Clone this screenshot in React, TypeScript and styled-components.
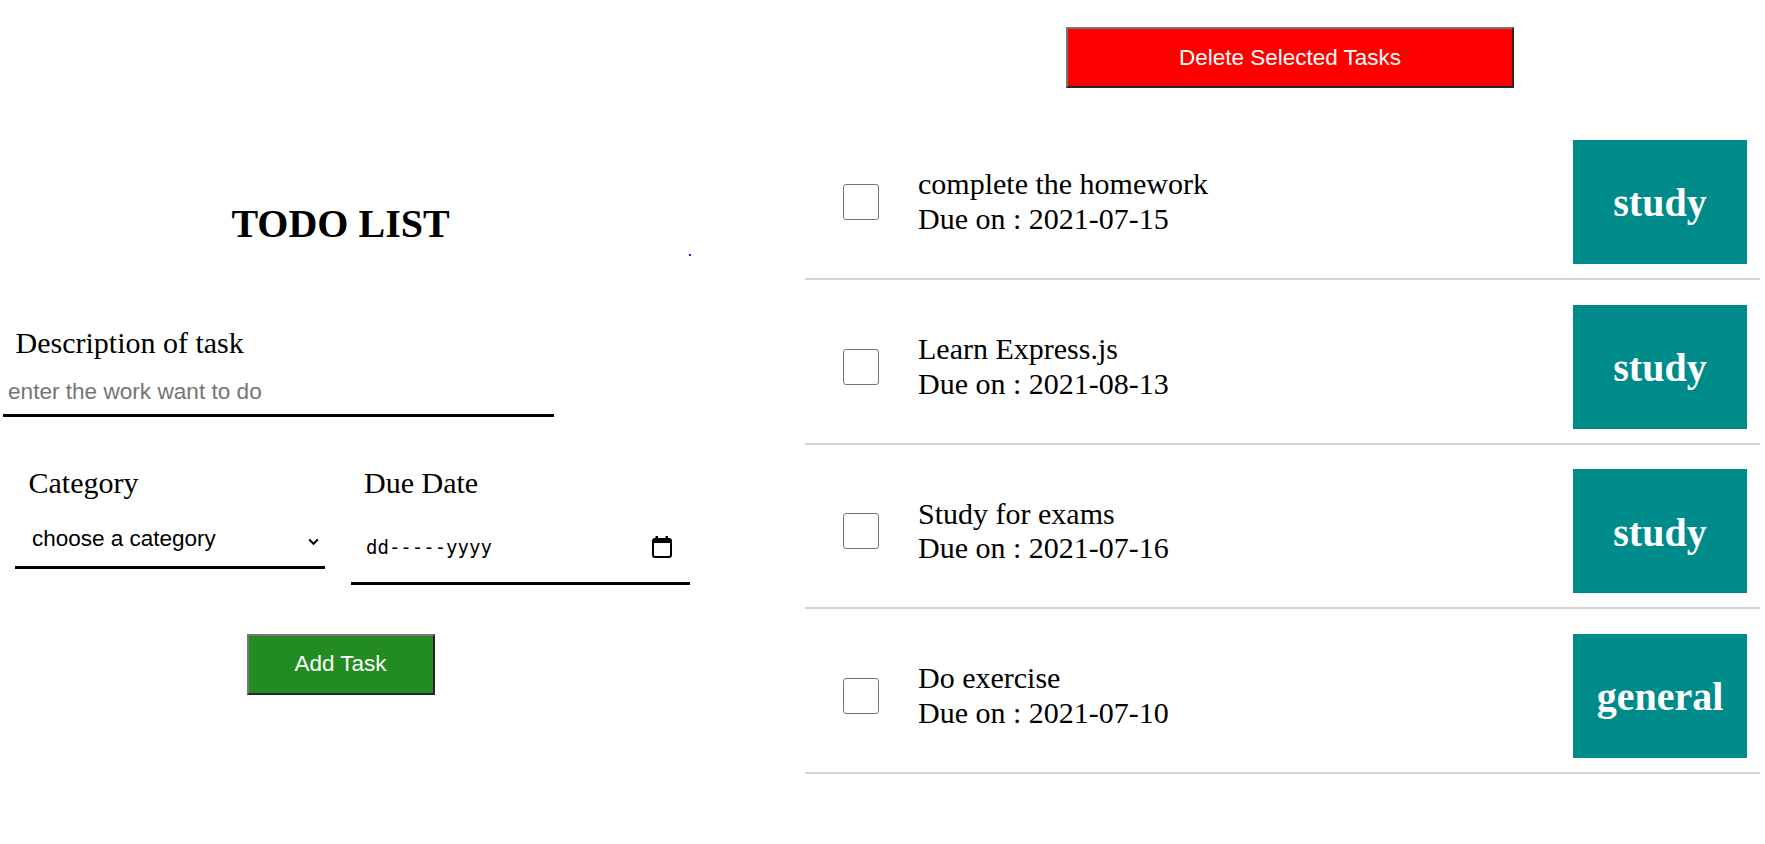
import React from "react";
import styled, { createGlobalStyle } from "styled-components";

const GlobalStyle = createGlobalStyle`
  html, body {
    margin: 0;
    padding: 0;
    background: #ffffff;
  }
  body {
    font-family: "Liberation Serif", "Times New Roman", serif;
    color: #000000;
  }
  * { box-sizing: border-box; }
`;

const Page = styled.div`
  display: flex;
  align-items: flex-start;
  width: 1765px;
  min-height: 844px;
`;

const LeftPanel = styled.section`
  position: relative;
  width: 681px;
  flex: none;
  padding-top: 201px;
  display: flex;
  flex-direction: column;
`;

const Heading = styled.h1`
  margin: 0;
  font-family: "Liberation Serif", "Times New Roman", serif;
  font-size: 40px;
  line-height: 46px;
  font-weight: 700;
  text-align: center;
`;

const StrayDot = styled.span`
  position: absolute;
  left: 689px;
  top: 254px;
  width: 2px;
  height: 2px;
  background: #1a1aff;
`;

const Label = styled.label<{ $indent: number; $top?: number }>`
  display: block;
  margin: ${(p) => p.$top ?? 0}px 0 0 ${(p) => p.$indent}px;
  font-family: "Liberation Serif", "Times New Roman", serif;
  font-size: 30px;
  line-height: 34px;
`;

const TextInput = styled.input`
  display: block;
  margin: 10px 0 0 3px;
  width: 551px;
  height: 47px;
  padding: 0 0 0 5px;
  border: none;
  border-bottom: 3px solid #000000;
  outline: none;
  background: transparent;
  font-family: "Liberation Sans", Arial, sans-serif;
  font-size: 22.6px;
  color: #000000;
  &::placeholder {
    color: #757575;
  }
`;

const FieldRow = styled.div`
  display: flex;
  align-items: flex-start;
  margin-top: 48.6px;
`;

const FieldGroup = styled.div<{ $left: number; $width: number }>`
  flex: none;
  margin-left: ${(p) => p.$left}px;
  width: ${(p) => p.$width}px;
  display: flex;
  flex-direction: column;
`;

const SelectWrap = styled.div`
  position: relative;
  margin-top: 12.4px;
`;

const Select = styled.select`
  appearance: none;
  -webkit-appearance: none;
  display: block;
  width: 100%;
  height: 57px;
  padding: 0 0 0 17px;
  border: none;
  border-bottom: 3px solid #000000;
  border-radius: 0;
  outline: none;
  background: transparent;
  font-family: "Liberation Sans", Arial, sans-serif;
  font-size: 22.5px;
  color: #000000;
`;

const Chevron = styled.svg`
  position: absolute;
  right: 6px;
  top: 26px;
  pointer-events: none;
`;

const DateField = styled.div`
  margin-top: 12.4px;
  height: 73px;
  display: flex;
  align-items: center;
  justify-content: space-between;
  padding: 0 18px 0 15px;
  border-bottom: 3px solid #000000;
  font-family: "DejaVu Sans Mono", Consolas, monospace;
  font-size: 19px;
  color: #000000;
`;

const PrimaryButton = styled.button<{ $bg: string; $width: number }>`
  display: flex;
  align-items: center;
  justify-content: center;
  width: ${(p) => p.$width}px;
  height: 61px;
  padding: 0;
  background: ${(p) => p.$bg};
  color: #ffffff;
  font-family: "Liberation Sans", Arial, sans-serif;
  font-size: 22.5px;
  border-style: solid;
  border-width: 2px;
  border-color: #767676 #262626 #262626 #767676;
  cursor: pointer;
`;

const AddButton = styled(PrimaryButton)`
  margin: 49px auto 0;
`;

const RightPanel = styled.section`
  margin-left: 124px;
  width: 955px;
  flex: none;
  padding-top: 27px;
  display: flex;
  flex-direction: column;
`;

const DeleteButton = styled(PrimaryButton)`
  margin-left: 261px;
`;

const TaskList = styled.ul`
  list-style: none;
  margin: 27.3px 0 0;
  padding: 0;
`;

const TaskRow = styled.li`
  display: flex;
  align-items: center;
  padding: 24.67px 0 14px;
  border-bottom: 2px solid #d3d3d3;
`;

const Check = styled.input`
  appearance: none;
  -webkit-appearance: none;
  flex: none;
  margin: 0 0 0 38px;
  width: 36px;
  height: 36px;
  border: 1.5px solid #767676;
  border-radius: 3px;
  background: #ffffff;
`;

const TaskText = styled.div`
  flex: 1;
  margin-left: 39px;
  font-family: "Liberation Serif", "Times New Roman", serif;
  font-size: 30px;
  line-height: 34.5px;
`;

const Badge = styled.div`
  flex: none;
  width: 174px;
  height: 124px;
  margin-right: 13px;
  display: flex;
  align-items: center;
  justify-content: center;
  padding-top: 3px;
  background: #008b8b;
  color: #ffffff;
  font-family: "Liberation Serif", "Times New Roman", serif;
  font-size: 40px;
  font-weight: 700;
  line-height: 46px;
`;

const CalendarIcon = () => (
  <svg width="20" height="22" viewBox="0 0 20 22" aria-hidden="true">
    <rect x="3.5" y="0" width="2.5" height="4" fill="#000" />
    <rect x="13.5" y="0" width="2.5" height="4" fill="#000" />
    <rect x="1" y="3" width="18" height="18" rx="2" fill="none" stroke="#000" strokeWidth="2" />
    <rect x="1" y="3" width="18" height="4" fill="#000" />
  </svg>
);

const tasks = [
  { id: 1, text: "complete the homework", due: "2021-07-15", category: "study" },
  { id: 2, text: "Learn Express.js", due: "2021-08-13", category: "study" },
  { id: 3, text: "Study for exams", due: "2021-07-16", category: "study" },
  { id: 4, text: "Do exercise", due: "2021-07-10", category: "general" },
];

export default function App() {
  return (
    <>
      <GlobalStyle />
      <Page>
        <LeftPanel>
          <Heading>TODO LIST</Heading>
          <StrayDot />
          <Label $indent={15.5} $top={79}>Description of task</Label>
          <TextInput placeholder="enter the work want to do" />
          <FieldRow>
            <FieldGroup $left={15} $width={310}>
              <Label $indent={13.5}>Category</Label>
              <SelectWrap>
                <Select defaultValue="">
                  <option value="">choose a category</option>
                  <option value="study">study</option>
                  <option value="general">general</option>
                </Select>
                <Chevron width="11" height="8" viewBox="0 0 11 8">
                  <path d="M1.2 1.5 L5.5 5.8 L9.8 1.5" fill="none" stroke="#000" strokeWidth="2" />
                </Chevron>
              </SelectWrap>
            </FieldGroup>
            <FieldGroup $left={26} $width={339}>
              <Label $indent={13}>Due Date</Label>
              <DateField>
                <span>dd-----yyyy</span>
                <CalendarIcon />
              </DateField>
            </FieldGroup>
          </FieldRow>
          <AddButton $bg="#228b22" $width={188}>Add Task</AddButton>
        </LeftPanel>
        <RightPanel>
          <DeleteButton $bg="#ff0000" $width={448}>Delete Selected Tasks</DeleteButton>
          <TaskList>
            {tasks.map((t) => (
              <TaskRow key={t.id}>
                <Check type="checkbox" />
                <TaskText>
                  <div>{t.text}</div>
                  <div>Due on : {t.due}</div>
                </TaskText>
                <Badge>{t.category}</Badge>
              </TaskRow>
            ))}
          </TaskList>
        </RightPanel>
      </Page>
    </>
  );
}
